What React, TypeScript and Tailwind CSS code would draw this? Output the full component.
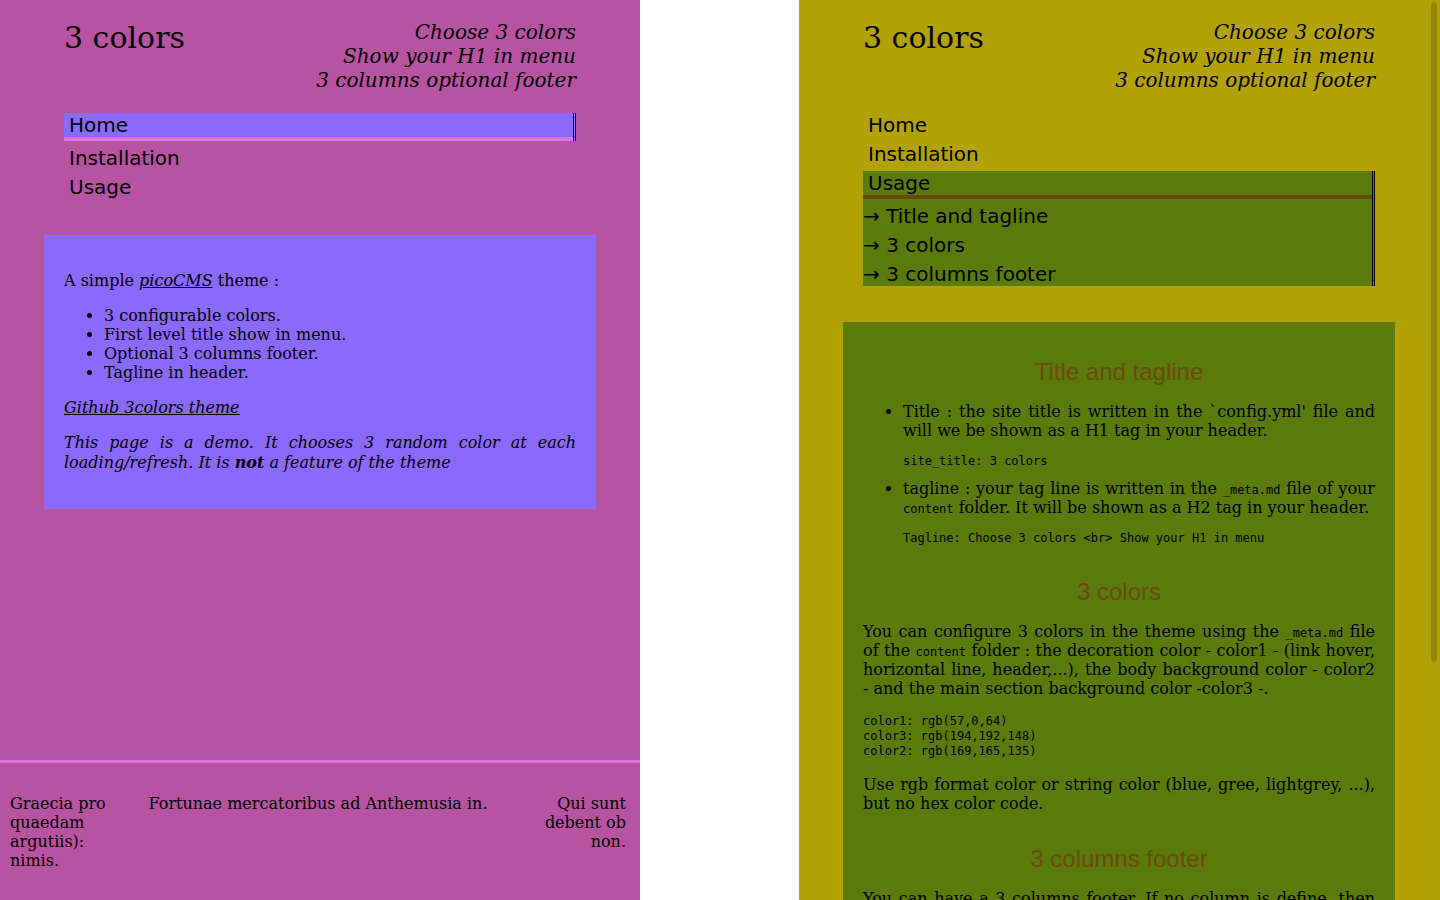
import React from "react";

const serif = "font-['DejaVu_Serif',serif]";
const sans = "font-['DejaVu_Sans',sans-serif]";
const mono = "font-['DejaVu_Sans_Mono',monospace]";

function Header() {
  return (
    <header className="flex justify-between px-16 pt-5">
      <h1 className={`${serif} text-[30px] leading-[35px] font-normal`}>3 colors</h1>
      <h2 className={`${serif} text-right text-[20px] leading-[24px] italic font-normal`}>
        Choose 3 colors
        <br />
        Show your H1 in menu
        <br />
        3 columns optional footer
      </h2>
    </header>
  );
}

function Nav({
  active,
  sub,
  mainBg,
  decoBorder,
}: {
  active: string;
  sub: string[];
  mainBg: string;
  decoBorder: string;
}) {
  const items = ["Home", "Installation", "Usage"];
  return (
    <ul className={`${sans} mx-16 mt-[21px] text-[20px] leading-[24px]`}>
      {items.map((it) =>
        it === active ? (
          <li key={it} className={`mb-[5px] border-r-[3px] border-double border-black ${mainBg}`}>
            <div className={`border-b-4 pl-[5px] ${decoBorder}`}>{it}</div>
            {sub.length > 0 && (
              <ul className="flex flex-col gap-[5px] pt-[5px]">
                {sub.map((s) => (
                  <li key={s}>→{"\u00a0"}{s}</li>
                ))}
              </ul>
            )}
          </li>
        ) : (
          <li key={it} className="mb-[5px] pl-[5px]">
            {it}
          </li>
        )
      )}
    </ul>
  );
}

function Code({ children }: { children: React.ReactNode }) {
  return <code className={`${mono} text-[12px] leading-none`}>{children}</code>;
}

function LeftFrame() {
  return (
    <div
      className={`${serif} flex h-[900px] w-[640px] shrink-0 flex-col bg-[#b753a0] text-[16px] leading-[19px] text-black`}
    >
      <Header />
      <Nav active="Home" sub={[]} mainBg="bg-[#8a69ff]" decoBorder="border-[#df70df]" />
      <main className="mx-11 mt-[31px] bg-[#8a69ff] p-5">
        <p className="my-4">
          A simple{" "}
          <a className="italic underline" href="#">
            picoCMS
          </a>{" "}
          theme :
        </p>
        <ul className="my-4 list-disc pl-10">
          <li>3 configurable colors.</li>
          <li>First level title show in menu.</li>
          <li>Optional 3 columns footer.</li>
          <li>Tagline in header.</li>
        </ul>
        <p className="my-4">
          <a className="italic underline" href="#">
            Github 3colors theme
          </a>
        </p>
        <p className="my-4 text-justify italic leading-[20px]">
          This page is a demo. It chooses 3 random color at each loading/refresh. It is{" "}
          <strong className="font-bold">not</strong> a feature of the theme
        </p>
      </main>
      <footer className="mt-auto h-[140px] border-t-[3px] border-[#df70df] pt-[31px] pl-[10px] pr-[14px]">
        <div className="grid grid-cols-[110px_1fr_110px]">
          <div>Graecia pro quaedam argutiis): nimis.</div>
          <div className="text-center">Fortunae mercatoribus ad Anthemusia in.</div>
          <div className="text-right">Qui sunt debent ob non.</div>
        </div>
      </footer>
    </div>
  );
}

function H2({ children, first }: { children: React.ReactNode; first?: boolean }) {
  return (
    <h2
      className={`font-['Liberation_Sans',Arial,sans-serif] text-center text-[24px] leading-[28px] font-normal text-[#6b4a0c] ${
        first ? "mt-4" : "mt-8"
      } mb-4`}
    >
      {children}
    </h2>
  );
}

function RightFrame() {
  return (
    <div
      className={`${serif} relative h-[900px] flex-1 overflow-hidden bg-[#b3a108] text-[16px] leading-[19px] text-black`}
    >
      <div className="flex w-[640px] flex-col">
        <Header />
        <Nav
          active="Usage"
          sub={["Title and tagline", "3 colors", "3 columns footer"]}
          mainBg="bg-[#5b7b0c]"
          decoBorder="border-[#624a0c]"
        />
        <main className="mx-11 mt-[31px] bg-[#5b7b0c] p-5">
          <H2 first>Title and tagline</H2>
          <ul className="my-4 list-disc pl-10 text-justify">
            <li>
              Title : the site title is written in the `config.yml' file and will we be shown as a H1 tag in
              your header.
              <pre className={`${mono} mt-[14px] mb-[10px] text-[12px] leading-[15px]`}>site_title: 3 colors</pre>
            </li>
            <li>
              tagline : your tag line is written in the <Code>_meta.md</Code> file of your <Code>content</Code>{" "}
              folder. It will be shown as a H2 tag in your header.
              <pre className={`${mono} mt-[14px] mb-[10px] text-[12px] leading-[15px]`}>
                Tagline: Choose 3 colors &lt;br&gt; Show your H1 in menu
              </pre>
            </li>
          </ul>
          <H2>3 colors</H2>
          <p className="my-4 text-justify">
            You can configure 3 colors in the theme using the <Code>_meta.md</Code> file of the{" "}
            <Code>content</Code> folder : the decoration color - color1 - (link hover, horizontal line,
            header,...), the body background color - color2 - and the main section background color -color3 -.
          </p>
          <pre className={`${mono} my-4 text-[12px] leading-[15px]`}>
            {"color1: rgb(57,0,64)\ncolor3: rgb(194,192,148)\ncolor2: rgb(169,165,135)"}
          </pre>
          <p className="my-4 text-justify">
            Use rgb format color or string color (blue, gree, lightgrey, ...), but no hex color code.
          </p>
          <H2>3 columns footer</H2>
          <p className="my-4 text-justify">
            You can have a 3 columns footer. If no column is define, then the footer is not shown. Each column
            is a file in the footer folder of your content.
          </p>
        </main>
      </div>
      <div className="absolute top-[2px] right-[3px] h-[660px] w-[6px] rounded-full bg-[#958608]" />
    </div>
  );
}

export default function App() {
  return (
    <div className="flex h-[900px] w-[1440px] overflow-hidden bg-white">
      <LeftFrame />
      <div className="w-[159px] shrink-0 bg-white" />
      <RightFrame />
    </div>
  );
}
